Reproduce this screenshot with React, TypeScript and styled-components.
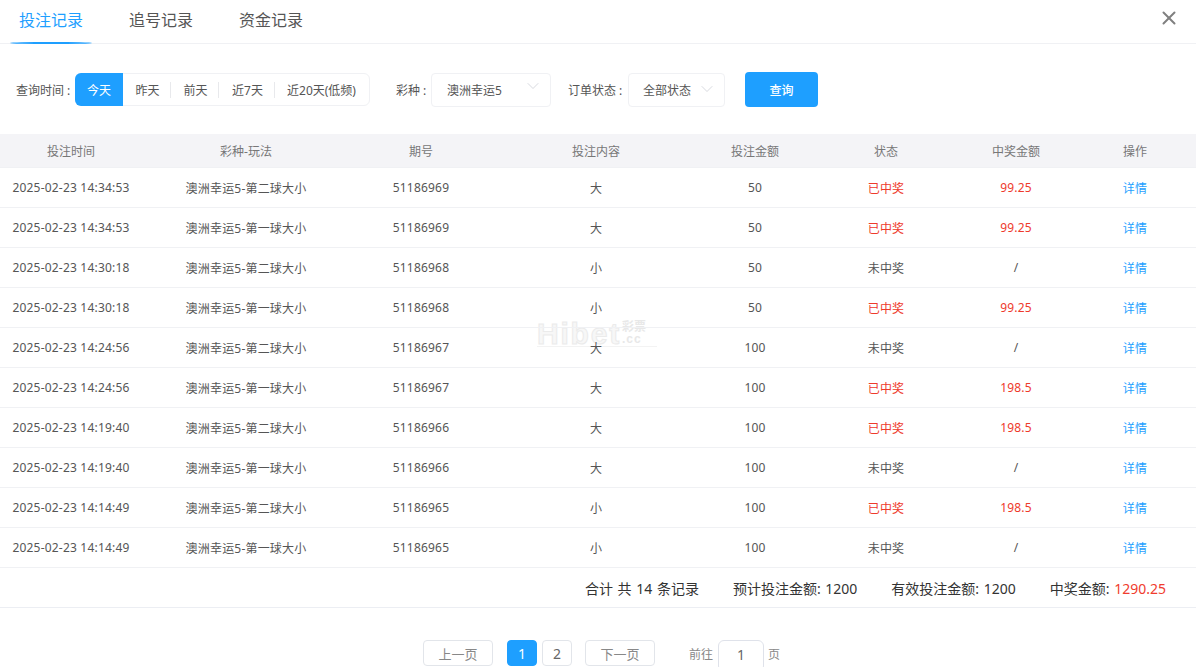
import React from 'react'
import styled, { createGlobalStyle } from 'styled-components'
import { ChevronDown, X } from 'lucide-react'

const GlobalStyle = createGlobalStyle`
  html, body {
    margin: 0;
    height: 100%;
    overflow: hidden;
    background: #fff;
  }
  body {
    font-family: "Noto Sans", "Noto Sans CJK SC", sans-serif;
    font-size: 12px;
    color: #444;
  }
`

const Page = styled.div`
  position: relative;
  width: 1196px;
  height: 667px;
  overflow: hidden;
`

const TabBar = styled.div`
  display: flex;
  align-items: stretch;
  height: 44px;
  padding-left: 10px;
  box-sizing: border-box;
  border-bottom: 1px solid #f0f1f4;
`

const Tab = styled.div<{ $active?: boolean }>`
  position: relative;
  width: 82px;
  margin-right: 28px;
  padding: 10px 0 0 9px;
  box-sizing: border-box;
  font-size: 16px;
  line-height: 20px;
  color: ${props => props.$active ? '#1e9fff' : '#555'};

  ${props => props.$active && `
    &::after {
      content: '';
      position: absolute;
      left: 0;
      right: 0;
      bottom: -1px;
      height: 2px;
      border-radius: 50%;
      background: #1e9fff;
    }
  `}
`

const CloseButton = styled.div`
  position: absolute;
  top: 7px;
  right: 16px;
  color: #808080;
  display: flex;
`

const FilterRow = styled.div`
  display: flex;
  align-items: center;
  height: 35px;
  margin-top: 28px;
  padding-left: 16px;
`

const FilterLabel = styled.span<{ $gap?: number; $width: number }>`
  width: ${props => props.$width}px;
  margin-left: ${props => props.$gap || 0}px;
  flex-shrink: 0;
  white-space: nowrap;
  color: #555;
`

const Segments = styled.div`
  display: flex;
  align-items: center;
  width: 295px;
  height: 33px;
  margin-left: 2px;
  box-sizing: border-box;
  border: 1px solid #f0f1f4;
  border-radius: 6px;
`

const Segment = styled.div<{ $active?: boolean; $width: number; $divider?: boolean; $inset?: number }>`
  width: ${props => props.$width}px;
  height: ${props => props.$active ? '33px' : '16px'};
  margin: ${props => props.$active ? '0 0 0 -1px' : '0'};
  padding-left: ${props => props.$inset || 0}px;
  flex-shrink: 0;
  display: flex;
  align-items: center;
  justify-content: center;
  box-sizing: border-box;
  white-space: nowrap;
  color: ${props => props.$active ? '#fff' : '#555'};
  background: ${props => props.$active ? '#1e9fff' : 'transparent'};
  border-radius: ${props => props.$active ? '6px 0 0 6px' : '0'};
  border-left: ${props => props.$divider ? '1px solid #e8e9ec' : 'none'};
`

const Select = styled.div<{ $width: number; $textLeft: number }>`
  position: relative;
  width: ${props => props.$width}px;
  height: 34px;
  margin-left: 2px;
  padding-left: ${props => props.$textLeft}px;
  box-sizing: border-box;
  display: flex;
  align-items: center;
  border: 1px solid #f0f1f4;
  border-radius: 4px;
  color: #555;
`

const SelectArrow = styled.span<{ $top: number }>`
  position: absolute;
  right: 7px;
  top: ${props => props.$top}px;
  display: flex;
  color: #d0d3d9;
`

const SearchButton = styled.button`
  width: 73px;
  height: 35px;
  margin-left: 20px;
  border: none;
  border-radius: 4px;
  background: #1e9fff;
  color: #fff;
  font: inherit;
  font-weight: 500;
`

const Table = styled.div`
  position: relative;
  margin-top: 27px;
`

const Row = styled.div<{ $header?: boolean; $height?: number }>`
  display: grid;
  grid-template-columns: 142px 208px 142px 208px 110px 152px 108px 126px;
  align-items: center;
  height: ${props => props.$height || 40}px;
  box-sizing: border-box;
  border-bottom: 1px solid #f0f1f4;
  background: ${props => props.$header ? '#f4f4f7' : 'transparent'};
  color: ${props => props.$header ? '#777' : '#555'};
  letter-spacing: ${props => props.$header ? 0 : 0.2}px;

  & > :last-child {
    padding-left: 4px;
  }
`

const Cell = styled.div<{ $color?: string }>`
  text-align: center;
  white-space: nowrap;
  color: ${props => props.$color || 'inherit'};
`

const SummaryRow = styled.div`
  display: flex;
  justify-content: flex-end;
  align-items: center;
  height: 40px;
  padding-right: 30px;
  box-sizing: border-box;
  border-bottom: 1px solid #eceef3;
  font-size: 14px;
  word-spacing: 1px;
  color: #333;
`

const SummaryItem = styled.span`
  margin-left: 34px;
  white-space: nowrap;
`

const WinAmount = styled.span`
  color: #f03c2e;
`

const Pager = styled.div`
  display: flex;
  align-items: flex-start;
  margin-top: 32px;
  padding-left: 423px;
  color: #888;
`

const PageStep = styled.div`
  width: 70px;
  height: 26px;
  box-sizing: border-box;
  display: flex;
  align-items: center;
  justify-content: center;
  border: 1px solid #e2e5ea;
  border-radius: 4px;
  font-size: 13px;
`

const PageNumber = styled.div<{ $active?: boolean }>`
  width: 30px;
  height: 26px;
  margin-left: ${props => props.$active ? 14 : 5}px;
  margin-right: ${props => props.$active ? 0 : 13}px;
  box-sizing: border-box;
  display: flex;
  align-items: center;
  justify-content: center;
  border: 1px solid ${props => props.$active ? '#1e9fff' : '#e2e5ea'};
  border-radius: 4px;
  font-size: 14px;
  background: ${props => props.$active ? '#1e9fff' : '#fff'};
  color: ${props => props.$active ? '#fff' : '#666'};
`

const JumpLabel = styled.span<{ $gap: number }>`
  margin-left: ${props => props.$gap}px;
  line-height: 30px;
`

const JumpInput = styled.div`
  width: 46px;
  height: 32px;
  margin-left: 5px;
  padding-bottom: 4px;
  box-sizing: border-box;
  display: flex;
  align-items: center;
  justify-content: center;
  border: 1px solid #dfe2ea;
  border-radius: 6px;
  font-size: 14px;
  color: #666;
`

const Watermark = styled.div`
  position: absolute;
  left: 537px;
  top: 319px;
  width: 120px;
  height: 28px;
  box-sizing: border-box;
  border-bottom: 1px solid #f3f3f3;
  font-family: "Liberation Sans", sans-serif;
  font-size: 30px;
  font-weight: 700;
  line-height: 30px;
  letter-spacing: 1.8px;
  color: #f7f7f7;
  -webkit-text-stroke: 1px #ebebeb;
  pointer-events: none;
`

const WatermarkMark = styled.span`
  position: absolute;
  left: 85px;
  top: 0;
  font-family: "Noto Sans CJK SC", sans-serif;
  font-size: 12px;
  line-height: 14px;
  letter-spacing: 0;
  -webkit-text-stroke: 0;
  color: #e8e8e8;
`

const WatermarkDomain = styled.span`
  position: absolute;
  left: 85px;
  top: 14px;
  font-size: 12px;
  line-height: 12px;
  letter-spacing: 1px;
  -webkit-text-stroke: 0;
  color: #e8e8e8;
`

const RED = '#ee3a2c'
const BLUE = '#1e9fff'

const rows = [
  ['2025-02-23 14:34:53', '澳洲幸运5-第二球大小', '51186969', '大', '50', true, '99.25'],
  ['2025-02-23 14:34:53', '澳洲幸运5-第一球大小', '51186969', '大', '50', true, '99.25'],
  ['2025-02-23 14:30:18', '澳洲幸运5-第二球大小', '51186968', '小', '50', false, '/'],
  ['2025-02-23 14:30:18', '澳洲幸运5-第一球大小', '51186968', '小', '50', true, '99.25'],
  ['2025-02-23 14:24:56', '澳洲幸运5-第二球大小', '51186967', '大', '100', false, '/'],
  ['2025-02-23 14:24:56', '澳洲幸运5-第一球大小', '51186967', '大', '100', true, '198.5'],
  ['2025-02-23 14:19:40', '澳洲幸运5-第二球大小', '51186966', '大', '100', true, '198.5'],
  ['2025-02-23 14:19:40', '澳洲幸运5-第一球大小', '51186966', '大', '100', false, '/'],
  ['2025-02-23 14:14:49', '澳洲幸运5-第二球大小', '51186965', '小', '100', true, '198.5'],
  ['2025-02-23 14:14:49', '澳洲幸运5-第一球大小', '51186965', '小', '100', false, '/'],
] as const

const headers = ['投注时间', '彩种-玩法', '期号', '投注内容', '投注金额', '状态', '中奖金额', '操作']

const App = () => {
  return (
    <Page>
      <GlobalStyle />
      <TabBar>
        <Tab $active>投注记录</Tab>
        <Tab>追号记录</Tab>
        <Tab>资金记录</Tab>
      </TabBar>
      <CloseButton><X size={22} strokeWidth={2.2} /></CloseButton>

      <FilterRow>
        <FilterLabel $width={57}>查询时间 :</FilterLabel>
        <Segments>
          <Segment $active $width={48}>今天</Segment>
          <Segment $width={47} $inset={2}>昨天</Segment>
          <Segment $width={48} $divider $inset={2}>前天</Segment>
          <Segment $width={56} $divider $inset={2}>近7天</Segment>
          <Segment $width={94} $divider>近20天(低频)</Segment>
        </Segments>
        <FilterLabel $gap={26} $width={33}>彩种 :</FilterLabel>
        <Select $width={120} $textLeft={15}>
          澳洲幸运5
          <SelectArrow $top={2}><ChevronDown size={20} strokeWidth={1} /></SelectArrow>
        </Select>
        <FilterLabel $gap={17} $width={58}>订单状态 :</FilterLabel>
        <Select $width={97} $textLeft={14}>
          全部状态
          <SelectArrow $top={5}><ChevronDown size={20} strokeWidth={1} /></SelectArrow>
        </Select>
        <SearchButton>查询</SearchButton>
      </FilterRow>

      <Watermark>
        Hibet
        <WatermarkMark>彩票</WatermarkMark>
        <WatermarkDomain>.cc</WatermarkDomain>
      </Watermark>

      <Table>
        <Row $header $height={34}>
          {headers.map(title => <Cell key={title}>{title}</Cell>)}
        </Row>
        {rows.map(([time, game, issue, content, amount, won, prize], index) => (
          <Row key={index}>
            <Cell>{time}</Cell>
            <Cell>{game}</Cell>
            <Cell>{issue}</Cell>
            <Cell>{content}</Cell>
            <Cell>{amount}</Cell>
            <Cell $color={won ? RED : undefined}>{won ? '已中奖' : '未中奖'}</Cell>
            <Cell $color={won ? RED : undefined}>{prize}</Cell>
            <Cell $color={BLUE}>详情</Cell>
          </Row>
        ))}
        <SummaryRow>
          <SummaryItem>合计 共 14 条记录</SummaryItem>
          <SummaryItem>预计投注金额: 1200</SummaryItem>
          <SummaryItem>有效投注金额: 1200</SummaryItem>
          <SummaryItem>中奖金额: <WinAmount>1290.25</WinAmount></SummaryItem>
        </SummaryRow>
      </Table>

      <Pager>
        <PageStep>上一页</PageStep>
        <PageNumber $active>1</PageNumber>
        <PageNumber>2</PageNumber>
        <PageStep>下一页</PageStep>
        <JumpLabel $gap={34}>前往</JumpLabel>
        <JumpInput>1</JumpInput>
        <JumpLabel $gap={4}>页</JumpLabel>
      </Pager>
    </Page>
  )
}

export default App
